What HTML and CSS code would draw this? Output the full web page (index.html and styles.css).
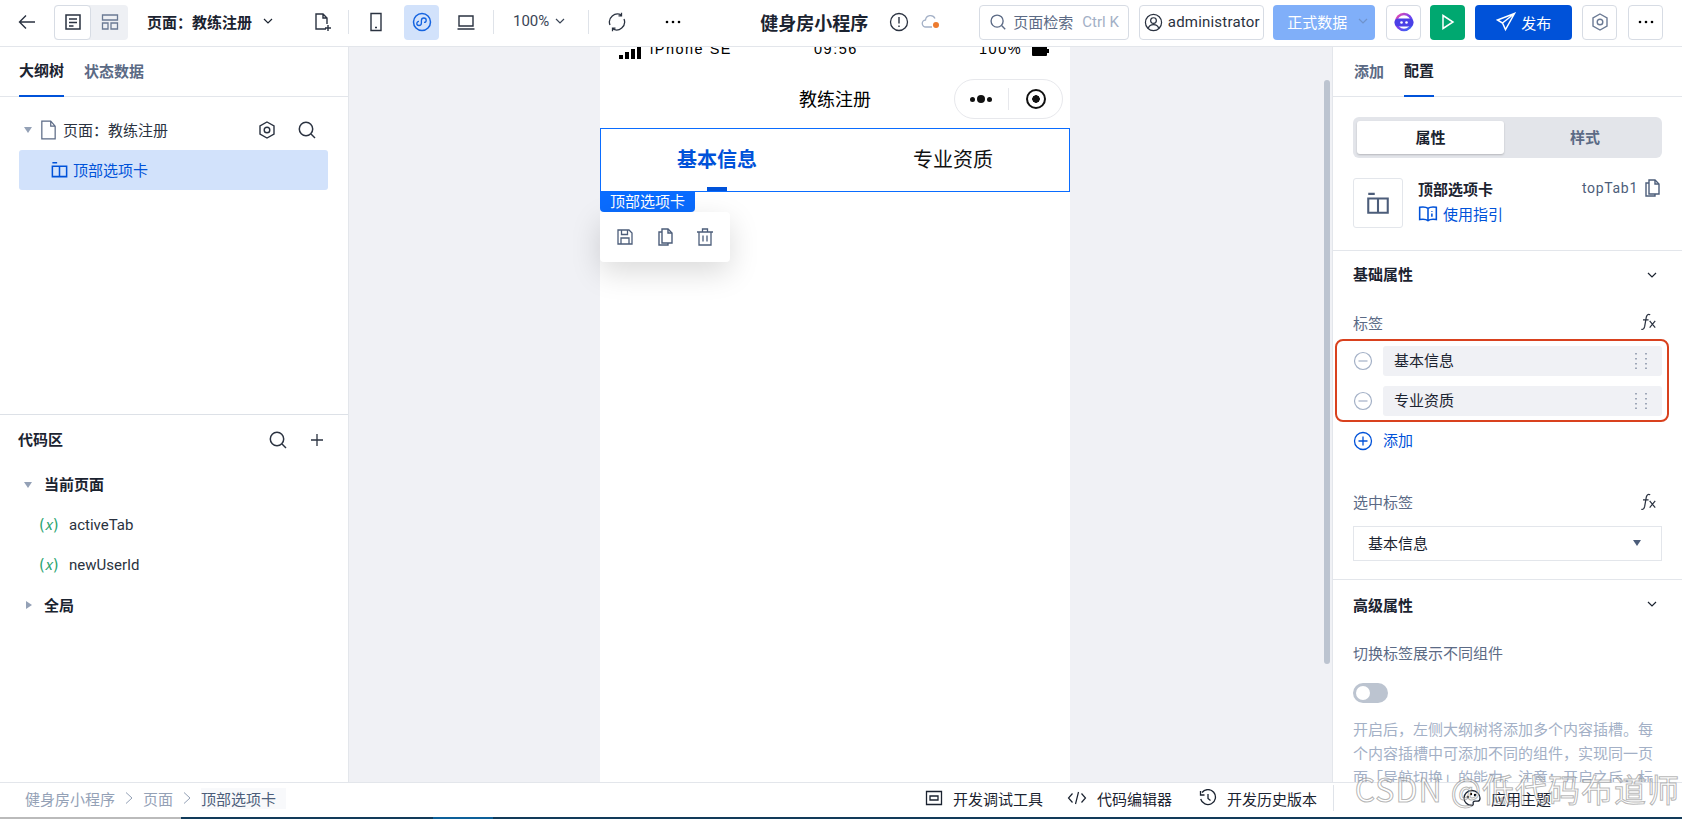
FILE: index.html
```html
<!DOCTYPE html>
<html lang="zh-CN">
<head>
    <meta charset="UTF-8">
    <title>健身房小程序</title>
    <link rel="stylesheet" href="styles.css">
</head>
<body>
    <svg class="icon-defs" width="0" height="0">
        <symbol id="i-search" viewBox="0 0 20 20"><circle cx="9" cy="9" r="6.7" fill="none" stroke="currentColor" stroke-width="1.5"/><path d="M14 14l4 4" fill="none" stroke="currentColor" stroke-width="1.5"/></symbol>
        <symbol id="i-hex" viewBox="0 0 20 20"><path d="M10 2l7 4v8l-7 4-7-4V6z" fill="none" stroke="currentColor" stroke-width="1.4"/><circle cx="10" cy="10" r="2.8" fill="none" stroke="currentColor" stroke-width="1.4"/></symbol>
        <symbol id="i-chev" viewBox="0 0 12 12"><path d="M2 4l4 4 4-4" fill="none" stroke="currentColor" stroke-width="1.2"/></symbol>
        <symbol id="i-copy" viewBox="0 0 20 20"><path d="M7 2h6l4 4v10H7z" fill="none" stroke="currentColor" stroke-width="1.4"/><path d="M13 2v4h4M7 5H4v13h9v-2" fill="none" stroke="currentColor" stroke-width="1.4"/></symbol>
        <symbol id="i-tab" viewBox="0 0 20 20"><path d="M2.500 6.500h15v11h-15zM10 6.500v11M2.500 3h5" fill="none" stroke="currentColor" stroke-width="1.6"/></symbol>
        <symbol id="i-fx" viewBox="0 0 18 18"><path d="M11 2.500c-2-1-3 0-3.500 2L6 13c-.4 2-1.500 3-3 2.500M4.500 7H9.500" fill="none" stroke="currentColor" stroke-width="1.1"/><path d="M10.500 8l5 6M15.500 8l-5 6" fill="none" stroke="currentColor" stroke-width="1.1"/></symbol>
        <symbol id="i-minus" viewBox="0 0 20 20"><circle cx="10" cy="10" r="8.500" fill="none" stroke="currentColor" stroke-width="1.2"/><path d="M5.500 10h9" stroke="currentColor" stroke-width="1.2"/></symbol>
        <symbol id="i-drag" viewBox="0 0 14 18"><path d="M2 1v1.500M2 6v1.500M2 11v1.500M2 15.500V17M12 1v1.500M12 6v1.500M12 11v1.500M12 15.500V17" stroke="currentColor" stroke-width="1.1"/></symbol>
        <symbol id="i-dots" viewBox="0 0 18 6"><circle cx="3" cy="3" r="1.300"/><circle cx="9" cy="3" r="1.300"/><circle cx="15" cy="3" r="1.300"/></symbol>
    </svg>

    <header class="topbar">
        <svg class="ico back" width="20" height="20" viewBox="0 0 20 20"><path d="M18 10H3M9 3.500L2.500 10 9 16.500" fill="none" stroke="currentColor" stroke-width="1.4"/></svg>
        <div class="view-switch">
            <span class="view-btn on"><svg width="20" height="20" viewBox="0 0 20 20"><path d="M3 3h14v14H3zM6 7h8M6 10.500h8M6 14h4.500" fill="none" stroke="currentColor" stroke-width="1.5"/></svg></span>
            <span class="view-btn"><svg width="20" height="20" viewBox="0 0 20 20"><path d="M2.500 3h15v5h-15zM2.500 11h5.500v6h-5.500zM11 11h6.500v6H11z" fill="none" stroke="currentColor" stroke-width="1.3"/></svg></span>
        </div>
        <div class="page-pick">页面：教练注册<svg width="12" height="12"><use href="#i-chev"/></svg></div>
        <svg class="ico file-add" width="20" height="20" viewBox="0 0 20 20"><path d="M14 17H4V2h7l4 4v6M11 2v4h4M13 16h6M16 13v6" fill="none" stroke="currentColor" stroke-width="1.4"/></svg>
        <span class="vline"></span>
        <svg class="ico phone-ico" width="20" height="20" viewBox="0 0 20 20"><path d="M5 1.500h10v17H5zM9 15.500h2" fill="none" stroke="currentColor" stroke-width="1.4"/></svg>
        <span class="mini-btn"><svg width="20" height="20" viewBox="0 0 20 20"><circle cx="10" cy="10" r="8.500" fill="none" stroke="currentColor" stroke-width="1.5"/><path d="M7 13.500c-1.500 0-2.200-1-2.200-2 0-1.300 1-2.200 2.200-2M7 13.500c1.500 0 2.400-1 2.400-2.500V8.500c0-1.500 1-2.500 2.500-2.500 1.300 0 2.300 1 2.300 2.200 0 1.300-1 2.200-2.200 2.200" fill="none" stroke="currentColor" stroke-width="1.3"/></svg></span>
        <svg class="ico laptop-ico" width="20" height="20" viewBox="0 0 20 20"><path d="M3 4h14v10H3zM1.500 17h17" fill="none" stroke="currentColor" stroke-width="1.4"/></svg>
        <span class="vline second"></span>
        <div class="zoom-pick">100%<svg width="12" height="12"><use href="#i-chev"/></svg></div>
        <span class="vline third"></span>
        <svg class="ico refresh" width="20" height="20" viewBox="0 0 20 20"><path d="M3 13A8 8 0 0 1 14.500 3.200M17 7a8 8 0 0 1-11.500 9.800M14.500 .8v3h-3M5.500 19.200v-3h3" fill="none" stroke="currentColor" stroke-width="1.3"/></svg>
        <svg class="ico dots-ico" width="18" height="6"><use href="#i-dots"/></svg>
        <div class="app-title">健身房小程序</div>
        <svg class="ico warn" width="20" height="20" viewBox="0 0 20 20"><circle cx="10" cy="10" r="8.500" fill="none" stroke="currentColor" stroke-width="1.3"/><path d="M10 5v6.500M10 13.500v1.500" fill="none" stroke="currentColor" stroke-width="1.4"/></svg>
        <svg class="ico cloud" width="20" height="18" viewBox="0 0 20 18"><path d="M11 14H5a3.500 3.500 0 0 1-.5-7A5 5 0 0 1 14 5.500" fill="none" stroke="#a3b0c6" stroke-width="1.3"/><circle cx="15" cy="12" r="3" fill="#ed7b2f"/></svg>
        <div class="search-box"><svg width="18" height="18"><use href="#i-search"/></svg><span>页面检索</span><em>Ctrl K</em></div>
        <div class="tool-btn admin"><svg width="19" height="19" viewBox="0 0 20 20"><circle cx="10" cy="10" r="8.500" fill="none" stroke="currentColor" stroke-width="1.3"/><circle cx="10" cy="8" r="3" fill="none" stroke="currentColor" stroke-width="1.3"/><path d="M4.500 16c1-3 3-3.800 5.500-3.800s4.500.8 5.500 3.800" fill="none" stroke="currentColor" stroke-width="1.3"/></svg>administrator</div>
        <div class="data-btn">正式数据<svg width="12" height="12"><use href="#i-chev"/></svg></div>
        <div class="tool-btn square ai"><svg width="22" height="22" viewBox="0 0 22 22"><defs><linearGradient id="aig" x1="0" y1="0" x2="1" y2="1"><stop offset="0" stop-color="#f04fa8"/><stop offset=".5" stop-color="#7a3ff0"/><stop offset="1" stop-color="#2a6cf0"/></linearGradient></defs><circle cx="11" cy="11" r="8" fill="none" stroke="url(#aig)" stroke-width="2.500"/><rect x="1.500" y="7.500" width="19" height="8" rx="4" fill="#4a3fe6"/><circle cx="8.500" cy="11.500" r="1.300" fill="#fff"/><circle cx="13.500" cy="11.500" r="1.300" fill="#fff"/></svg></div>
        <div class="run-btn"><svg width="16" height="18" viewBox="0 0 16 18"><path d="M3 2.500l10 6.500-10 6.500z" fill="none" stroke="#fff" stroke-width="1.500"/></svg></div>
        <div class="publish-btn"><svg width="20" height="20" viewBox="0 0 20 20"><path d="M18.500 1.500L1.500 8l5 3 3 6.500zM6.500 11L18.500 1.500" fill="none" stroke="#fff" stroke-width="1.500"/></svg>发布</div>
        <div class="tool-btn square"><svg class="grey" width="20" height="20"><use href="#i-hex"/></svg></div>
        <div class="tool-btn square more"><svg width="18" height="6"><use href="#i-dots"/></svg></div>
    </header>

    <main class="workspace">
        <aside class="left-panel">
            <div class="outline">
                <nav class="tabs">
                    <span class="tab on">大纲树</span>
                    <span class="tab">状态数据</span>
                </nav>
                <div class="page-row">
                    <span class="tri down"></span>
                    <svg class="doc" width="19" height="20" viewBox="0 0 17 18"><path d="M2.500 1h8l4 4.500V17h-12zM10.500 1v4.500h4" fill="none" stroke="#5b6a85" stroke-width="1.100"/></svg>
                    <span class="page-name">页面：教练注册</span>
                    <svg class="row-ico" width="20" height="20"><use href="#i-hex"/></svg>
                    <svg class="row-ico" width="20" height="20"><use href="#i-search"/></svg>
                </div>
                <div class="selected-row"><svg width="19" height="19"><use href="#i-tab"/></svg>顶部选项卡</div>
            </div>
            <div class="code-area">
                <div class="code-head">
                    <span>代码区</span>
                    <svg width="20" height="20"><use href="#i-search"/></svg>
                    <svg width="20" height="20" viewBox="0 0 20 20"><path d="M10 4v12M4 10h12" stroke="currentColor" stroke-width="1.300"/></svg>
                </div>
                <div class="code-group first"><span class="tri down"></span><span class="lift">当前页面</span></div>
                <div class="code-var"><i>(𝑥)</i>activeTab</div>
                <div class="code-var"><i>(𝑥)</i>newUserId</div>
                <div class="code-group"><span class="tri right"></span><span class="lift">全局</span></div>
            </div>
        </aside>

        <section class="canvas">
            <div class="phone">
                <div class="status-bar">
                    <span class="signal"><b></b><b></b><b></b><b></b></span>
                    <span class="carrier">iPhone SE</span>
                    <span class="clock">09:56</span>
                    <span class="battery-txt">100%</span>
                    <span class="battery"></span>
                </div>
                <div class="nav-bar">
                    <span>教练注册</span>
                    <div class="capsule">
                        <span class="cap-dots"><b></b><b></b><b></b></span>
                        <span class="cap-line"></span>
                        <span class="cap-rec"></span>
                    </div>
                </div>
                <div class="tab-box">
                    <span class="top-tab on">基本信息</span>
                    <span class="top-tab">专业资质</span>
                </div>
                <div class="sel-label">顶部选项卡</div>
                <div class="sel-tools">
                    <svg width="20" height="20" viewBox="0 0 20 20"><path d="M3 3h11l3 3v11H3zM6.500 3v4.500h6V3M6 17v-6h8v6" fill="none" stroke="currentColor" stroke-width="1.300"/></svg>
                    <svg width="20" height="20"><use href="#i-copy"/></svg>
                    <svg width="20" height="20" viewBox="0 0 20 20"><path d="M4 5v13h12V5M2 5h16M7.500 5V2h5v3M8 8.500v6M12 8.500v6" fill="none" stroke="currentColor" stroke-width="1.300"/></svg>
                </div>
            </div>
            <div class="scrollbar"></div>
        </section>

        <aside class="right-panel">
            <nav class="tabs right">
                <span class="tab">添加</span>
                <span class="tab on">配置</span>
            </nav>
            <div class="comp-head">
                <div class="segment"><span class="seg on">属性</span><span class="seg">样式</span></div>
                <div class="comp-card">
                    <div class="comp-ico"><svg width="26" height="26"><use href="#i-tab"/></svg></div>
                    <div class="comp-info">
                        <div class="comp-line"><b>顶部选项卡</b><span>topTab1</span><svg width="20" height="20"><use href="#i-copy"/></svg></div>
                        <a class="guide"><svg width="20" height="20" viewBox="0 0 18 18"><path d="M9 4C7.500 2.800 4.500 2.500 1.500 3v11c3-.5 6-.2 7.500 1 1.500-1.200 4.500-1.500 7.500-1V3C13.500 2.500 10.500 2.800 9 4zM9 4v11M12.500 6.500v.8M12.500 8.500v3" fill="none" stroke="currentColor" stroke-width="1.400"/></svg>使用指引</a>
                    </div>
                </div>
            </div>
            <div class="prop-section">
                <div class="sec-title">基础属性<svg width="12" height="12"><use href="#i-chev"/></svg></div>
                <div class="field-label">标签<svg width="20" height="20"><use href="#i-fx"/></svg></div>
                <div class="tag-list">
                    <div class="tag-row"><svg class="minus" width="20" height="20"><use href="#i-minus"/></svg><div class="tag-input"><span class="lift2">基本信息</span><svg width="14" height="18"><use href="#i-drag"/></svg></div></div>
                    <div class="tag-row"><svg class="minus" width="20" height="20"><use href="#i-minus"/></svg><div class="tag-input"><span class="lift2">专业资质</span><svg width="14" height="18"><use href="#i-drag"/></svg></div></div>
                </div>
                <div class="add-row"><svg width="20" height="20" viewBox="0 0 20 20"><circle cx="10" cy="10" r="8.500" fill="none" stroke="currentColor" stroke-width="1.300"/><path d="M5.500 10h9M10 5.500v9" stroke="currentColor" stroke-width="1.300"/></svg><span class="lift2">添加</span></div>
                <div class="field-label gap"><span class="lift">选中标签</span><svg width="20" height="20"><use href="#i-fx"/></svg></div>
                <div class="select-box"><span class="lift">基本信息</span><span class="sel-arrow"></span></div>
            </div>
            <div class="prop-section adv">
                <div class="sec-title">高级属性<svg width="12" height="12"><use href="#i-chev"/></svg></div>
                <div class="adv-label">切换标签展示不同组件</div>
                <div class="toggle"><span></span></div>
                <p class="help">开启后，左侧大纲树将添加多个内容插槽。每个内容插槽中可添加不同的组件，实现同一页面「导航切换」的能力。注意：开启之后，标签内容将会被清除。</p>
            </div>
        </aside>
    </main>

    <footer class="bottom-bar">
        <div class="crumbs">
            <span>健身房小程序</span><svg width="10" height="14" viewBox="0 0 10 14"><path d="M2 1.500L8 7l-6 5.500" fill="none" stroke="currentColor" stroke-width="1"/></svg>
            <span>页面</span><svg width="10" height="14" viewBox="0 0 10 14"><path d="M2 1.500L8 7l-6 5.500" fill="none" stroke="currentColor" stroke-width="1"/></svg>
            <span class="cur">顶部选项卡</span>
        </div>
        <div class="dev-tools">
            <span class="dev-item"><svg width="18" height="18" viewBox="0 0 18 18"><path d="M1.500 2.500h15v13h-15zM5 7h8v4H5z" fill="none" stroke="currentColor" stroke-width="1.300"/></svg>开发调试工具</span>
            <span class="dev-item code"><svg width="20" height="18" viewBox="0 0 20 18"><path d="M5.500 4.500L1.500 9l4 4.500M14.500 4.500l4 4.500-4 4.500M11.500 3l-3 12" fill="none" stroke="currentColor" stroke-width="1.200"/></svg>代码编辑器</span>
            <span class="dev-item history"><svg width="18" height="18" viewBox="0 0 18 18"><path d="M3 3.500A7.500 7.500 0 1 1 1.700 10M1.500 2v4h4M9 5v4.500l2.500 2" fill="none" stroke="currentColor" stroke-width="1.300"/></svg>开发历史版本</span>
            <span class="dev-line"></span>
            <span class="dev-item theme"><svg width="18" height="18" viewBox="0 0 18 18"><path d="M9 1.500C4.500 1.500 1 5 1 9s3.500 7.500 7.500 7.500c1.500 0 2-1 1.700-2-.4-1.300.3-2.300 1.800-2.300h2.500c1.500 0 2.500-1 2.500-3 0-4-3.500-7.700-8-7.700z" fill="none" stroke="currentColor" stroke-width="1.300"/><circle cx="5" cy="8" r="1.200"/><circle cx="8" cy="5" r="1.200"/><circle cx="12" cy="6" r="1.200"/></svg>应用主题</span>
        </div>
    </footer>
    <div class="taskbar"><i class="t-grey"></i><i class="t-navy"></i><i class="t-blue"></i><i class="t-rest"></i></div>

    <div class="watermark">CSDN @低代码布道师</div>
</body>
</html>
```

FILE: styles.css
```css
* {
    box-sizing: border-box;
}
html, body {
    margin: 0;
    height: 100%;
}
body {
    display: flex;
    flex-direction: column;
    height: 100vh;
    overflow: hidden;
    font-family: "Noto Sans CJK SC", "Noto Sans", sans-serif;
    font-size: 15px;
    color: #1b2330;
    background: #fff;
}
svg {
    display: block;
    flex: none;
}
.icon-defs {
    position: absolute;
}
.lift {
    padding-bottom: 2px;
}
.lift2 {
    padding-bottom: 4px;
}

/* top bar */
.topbar {
    display: flex;
    align-items: center;
    flex: none;
    height: 47px;
    padding: 0 0 2px 17px;
    border-bottom: 1px solid #e3e6eb;
    background: #fff;
    position: relative;
    z-index: 2;
}
.topbar > * {
    flex: none;
}
.ico {
    color: #2a3240;
}
.back {
    margin-right: 17px;
}
.view-switch {
    display: flex;
    height: 35px;
    width: 74px;
    background: #eef0f4;
    border-radius: 4px;
}
.view-btn {
    width: 37px;
    display: flex;
    align-items: center;
    justify-content: center;
    color: #6b7a94;
}
.view-btn.on {
    background: #fff;
    border: 1px solid #d7dce4;
    border-radius: 4px;
    color: #2a3240;
}
.page-pick {
    display: flex;
    align-items: center;
    gap: 10px;
    margin-left: 19px;
    padding-bottom: 2px;
    width: 167px;
    font-weight: 700;
    font-size: 15px;
}
.file-add {
    margin-left: -2px;
}
.vline {
    width: 1px;
    height: 24px;
    background: #dfe3e9;
    margin: 0 17px 0 16px;
}
.mini-btn {
    width: 35px;
    height: 35px;
    margin-left: 18px;
    border-radius: 4px;
    background: #d2e2fb;
    color: #1463e0;
    display: flex;
    align-items: center;
    justify-content: center;
}
.laptop-ico {
    margin-left: 17px;
}
.vline.second {
    margin: 0 0 0 17px;
}
.zoom-pick {
    display: flex;
    align-items: center;
    gap: 5px;
    margin-left: 19px;
    padding-bottom: 2px;
    font-size: 15px;
    font-family: Roboto, sans-serif;
    color: #3a4556;
}
.vline.third {
    margin: 0 0 0 22px;
}
.refresh {
    margin-left: 18px;
}
.dots-ico {
    margin-left: 37px;
}
.app-title {
    margin-left: 78px;
    font-size: 18px;
    font-weight: 700;
    white-space: nowrap;
}
.warn {
    margin-left: 21px;
}
.cloud {
    margin-left: 12px;
}
.search-box {
    display: flex;
    align-items: center;
    gap: 6px;
    width: 150px;
    height: 35px;
    margin-left: 38px;
    padding-left: 9px;
    border: 1px solid #d7dce4;
    border-radius: 4px;
    color: #5b6a85;
    white-space: nowrap;
}
.search-box span {
    padding-bottom: 2px;
    font-size: 15px;
}
.search-box em {
    margin-left: 3px;
    font-style: normal;
    font-family: Roboto, sans-serif;
    color: #a3b0c6;
}
.tool-btn {
    display: flex;
    align-items: center;
    justify-content: center;
    height: 35px;
    border: 1px solid #d7dce4;
    border-radius: 4px;
    background: #fff;
}
.tool-btn.admin {
    width: 125px;
    margin-left: 10px;
    gap: 5px;
    font-family: Roboto, sans-serif;
    letter-spacing: .2px;
    color: #2a3240;
}
.tool-btn.square {
    width: 35px;
}
.tool-btn .grey {
    color: #6b7a94;
}
.tool-btn.more {
    margin-left: 11px;
}
.data-btn {
    display: flex;
    align-items: center;
    gap: 10px;
    width: 102px;
    height: 35px;
    margin-left: 9px;
    padding: 0 0 2px 14px;
    border-radius: 4px;
    background: #80aff9;
    color: #fff;
    font-size: 15px;
}
.data-btn svg {
    color: #6f93cc;
}
.ai {
    margin-left: 11px;
}
.run-btn {
    display: flex;
    align-items: center;
    justify-content: center;
    width: 35px;
    height: 35px;
    margin-left: 9px;
    border-radius: 4px;
    background: #00a870;
}
.publish-btn {
    display: flex;
    align-items: center;
    justify-content: center;
    gap: 5px;
    width: 97px;
    height: 35px;
    margin: 0 10px;
    border-radius: 4px;
    background: #0052d9;
    color: #fff;
    font-size: 15px;
}

/* workspace */
.workspace {
    display: flex;
    flex: 1;
    min-height: 0;
}
.left-panel {
    display: flex;
    flex-direction: column;
    flex: none;
    width: 349px;
    border-right: 1px solid #e3e6eb;
    background: #fff;
}
.outline {
    height: 368px;
    border-bottom: 1px solid #dde1e7;
}
.tabs {
    display: flex;
    gap: 20px;
    height: 50px;
    padding: 0 19px;
    border-bottom: 1px solid #e3e6eb;
}
.tabs.right {
    padding-left: 21px;
}
.tab {
    display: flex;
    align-items: center;
    height: 50px;
    padding-bottom: 3px;
    font-size: 15px;
    font-weight: 700;
    color: #5b6a85;
}
.tab.on {
    color: #1b2330;
    border-bottom: 2px solid #0052d9;
}
.page-row {
    display: flex;
    align-items: center;
    height: 40px;
    margin-top: 13px;
    padding-left: 24px;
    font-size: 15px;
}
.tri {
    display: inline-block;
    width: 0;
    height: 0;
    flex: none;
}
.tri.down {
    border-left: 4px solid transparent;
    border-right: 4px solid transparent;
    border-top: 6px solid #94a1b6;
}
.tri.right {
    margin-left: 2px;
    border-top: 4px solid transparent;
    border-bottom: 4px solid transparent;
    border-left: 6px solid #94a1b6;
}
.doc {
    margin-left: 7px;
}
.page-name {
    margin-left: 5px;
    padding-bottom: 2px;
    width: 194px;
    color: #2a3240;
}
.row-ico {
    margin-right: 20px;
    color: #2a3240;
}
.selected-row {
    display: flex;
    align-items: center;
    gap: 4px;
    height: 40px;
    margin: 0 20px 0 19px;
    padding: 0 0 2px 31px;
    border-radius: 3px;
    background: #d2e2fb;
    color: #0052d9;
    font-size: 15px;
}
.code-head {
    display: flex;
    align-items: center;
    gap: 19px;
    height: 49px;
    padding: 0 21px 0 18px;
    color: #2a3240;
}
.code-head span {
    flex: 1;
    padding-bottom: 2px;
    font-size: 15px;
    font-weight: 700;
    color: #1b2330;
}
.code-group {
    display: flex;
    align-items: center;
    gap: 12px;
    height: 40px;
    padding-left: 24px;
    font-size: 15px;
    font-weight: 700;
}
.code-group.first {
    height: 41px;
}
.code-var {
    display: flex;
    align-items: center;
    height: 40px;
    padding-left: 39px;
    font-family: Roboto, sans-serif;
    font-size: 15px;
    color: #2a3240;
}
.code-var i {
    width: 30px;
    font-style: normal;
    color: #2ba471;
    font-family: "DejaVu Sans", serif;
    font-size: 15px;
    white-space: nowrap;
}

/* canvas */
.canvas {
    display: flex;
    flex: 1;
    min-width: 0;
    overflow: hidden;
    background: #f0f1f5;
}
.phone {
    position: relative;
    flex: none;
    width: 470px;
    margin-left: 251px;
    margin-top: -10px;
    background: #fff;
}
.status-bar {
    display: flex;
    align-items: center;
    height: 24px;
    padding-left: 19px;
    font-family: "Liberation Sans", sans-serif;
    font-size: 14.500px;
    letter-spacing: 1.500px;
    color: #000;
}
.signal {
    display: flex;
    align-items: flex-end;
    gap: 2px;
    width: 31px;
    height: 12px;
    margin-top: 8px;
}
.signal b {
    width: 4px;
    background: #000;
}
.signal b:nth-child(1) { height: 4px; }
.signal b:nth-child(2) { height: 7px; }
.signal b:nth-child(3) { height: 10px; }
.signal b:nth-child(4) { height: 12px; }
.carrier {
    width: 164px;
}
.clock {
    width: 165px;
}
.battery-txt {
    width: 53px;
}
.battery {
    position: relative;
    width: 15px;
    height: 10px;
    margin-top: 3px;
    background: #000;
    border-radius: 1px;
}
.battery::after {
    content: "";
    position: absolute;
    right: -2px;
    top: 3px;
    width: 2px;
    height: 4px;
    background: #000;
}
.nav-bar {
    position: relative;
    display: flex;
    align-items: center;
    justify-content: center;
    height: 67px;
    padding-top: 6px;
    font-size: 18px;
    color: #000;
}
.capsule {
    position: absolute;
    top: 18px;
    right: 7px;
    display: flex;
    align-items: center;
    width: 109px;
    height: 40px;
    border: 1px solid #e7e8ec;
    border-radius: 20px;
}
.cap-dots {
    display: flex;
    align-items: center;
    gap: 2px;
    margin-left: 15px;
}
.cap-dots b {
    width: 5px;
    height: 5px;
    border-radius: 50%;
    background: #111;
}
.cap-dots b:nth-child(2) {
    width: 8px;
    height: 8px;
}
.cap-line {
    width: 1px;
    height: 22px;
    margin-left: 16px;
    background: #e7e8ec;
}
.cap-rec {
    width: 20px;
    height: 20px;
    margin-left: 17px;
    border-radius: 50%;
    border: 2px solid #111;
    background: radial-gradient(circle, #111 0 3.500px, #fff 4px);
}
.tab-box {
    display: flex;
    height: 64px;
    border: 1px solid #0a6cff;
}
.top-tab {
    position: relative;
    display: flex;
    align-items: center;
    justify-content: center;
    width: 50%;
    padding: 0 0 4px 2px;
    font-size: 20px;
    color: #111;
}
.top-tab.on {
    padding: 0 2px 4px 0;
    color: #0052d9;
    font-weight: 700;
}
.top-tab.on::after {
    content: "";
    position: absolute;
    left: 106px;
    bottom: 0;
    width: 20px;
    height: 4px;
    background: #0052d9;
}
.sel-label {
    position: absolute;
    left: 0;
    top: 155px;
    width: 95px;
    height: 20px;
    line-height: 18px;
    padding-left: 10px;
    border-radius: 0 0 4px 4px;
    background: #0a6cff;
    color: #fff;
    font-size: 15px;
    white-space: nowrap;
}
.sel-tools {
    position: absolute;
    left: 0;
    top: 175px;
    display: flex;
    align-items: center;
    gap: 20px;
    width: 130px;
    height: 50px;
    padding-left: 15px;
    border-radius: 4px;
    background: #fff;
    color: #4c5d7a;
    box-shadow: 0 10px 30px rgba(0, 0, 0, 0.15);
}
.scrollbar {
    flex: none;
    width: 6px;
    height: 584px;
    margin: 33px 2px 0 auto;
    border-radius: 3px;
    background: #bcc4d0;
}

/* right panel */
.right-panel {
    flex: none;
    width: 350px;
    overflow: hidden;
    border-left: 1px solid #e3e6eb;
    background: #fff;
}
.comp-head {
    height: 154px;
    padding: 20px 20px 0 20px;
    border-bottom: 1px solid #e3e6eb;
}
.segment {
    display: flex;
    height: 41px;
    padding: 4px;
    border-radius: 6px;
    background: #e3e5ea;
}
.seg {
    display: flex;
    align-items: center;
    justify-content: center;
    flex: 1;
    padding: 0 0 3px 8px;
    font-size: 15px;
    font-weight: 700;
    color: #5b6a85;
}
.seg.on {
    flex: none;
    width: 147px;
    padding-left: 0;
    background: #fff;
    border-radius: 3px;
    color: #1b2330;
    box-shadow: 0 1px 2px rgba(0, 0, 0, 0.2);
}
.comp-card {
    display: flex;
    gap: 15px;
    margin-top: 20px;
}
.comp-ico {
    display: flex;
    align-items: center;
    justify-content: center;
    width: 50px;
    height: 50px;
    border: 1px solid #e3e6eb;
    border-radius: 3px;
    color: #4c5d7a;
}
.comp-info {
    flex: 1;
}
.comp-line {
    display: flex;
    align-items: center;
    height: 20px;
    color: #4c5d7a;
}
.comp-line b {
    flex: 1;
    font-size: 15px;
    color: #1b2330;
}
.comp-line span {
    margin-right: 4px;
    font-family: Roboto, sans-serif;
    font-size: 14px;
    letter-spacing: .7px;
}
.guide {
    display: flex;
    align-items: center;
    gap: 5px;
    margin-top: 5px;
    color: #0052d9;
    font-size: 15px;
}
.prop-section {
    padding: 0 20px;
    border-bottom: 1px solid #e3e6eb;
    height: 329px;
}
.sec-title {
    display: flex;
    align-items: center;
    justify-content: space-between;
    height: 50px;
    padding: 0 4px 6px 0;
    font-size: 15px;
    font-weight: 700;
}
.sec-title svg {
    margin-top: 4px;
}
.field-label {
    display: flex;
    align-items: center;
    justify-content: space-between;
    height: 24px;
    margin-top: 9px;
    padding-right: 4px;
    color: #5b6a85;
    font-size: 15px;
}
.field-label svg {
    color: #2a3240;
}
.field-label.gap {
    margin-top: 34px;
}
.tag-list {
    margin: 5px -7px 0 -18px;
    padding: 5px 5px 4px 16px;
    border: 2px solid #d9411e;
    border-radius: 8px;
}
.tag-row {
    display: flex;
    align-items: center;
    gap: 10px;
    height: 30px;
}
.tag-row + .tag-row {
    margin-top: 10px;
}
.minus {
    color: #a3b0c6;
}
.tag-input {
    display: flex;
    align-items: center;
    justify-content: space-between;
    flex: 1;
    height: 30px;
    padding: 0 14px 0 11px;
    border-radius: 3px;
    background: #f0f1f5;
    font-size: 15px;
}
.tag-input svg {
    color: #5b6a85;
}
.add-row {
    display: flex;
    align-items: center;
    gap: 10px;
    height: 30px;
    margin-top: 4px;
    color: #0052d9;
    font-size: 15px;
}
.select-box {
    position: relative;
    display: flex;
    align-items: center;
    height: 35px;
    margin-top: 12px;
    padding-left: 14px;
    border: 1px solid #e3e6eb;
    font-size: 15px;
}
.sel-arrow {
    position: absolute;
    right: 20px;
    top: 13px;
    border-left: 4px solid transparent;
    border-right: 4px solid transparent;
    border-top: 6px solid #4c5d7a;
}
.adv {
    border-bottom: none;
    height: auto;
}
.adv .sec-title {
    height: 48px;
    padding-bottom: 0;
}
.adv .sec-title svg {
    margin-top: 0;
}
.adv-label {
    margin-top: 14px;
    color: #5b6a85;
    font-size: 15px;
}
.toggle {
    width: 35px;
    height: 20px;
    margin-top: 20px;
    padding: 3px;
    border-radius: 10px;
    background: #bcc4d0;
}
.toggle span {
    display: block;
    width: 14px;
    height: 14px;
    border-radius: 50%;
    background: #fff;
}
.help {
    margin: 14px 0 0 0;
    line-height: 24px;
    font-size: 15px;
    color: #a3b0c6;
}

/* bottom bar */
.bottom-bar {
    display: flex;
    align-items: center;
    justify-content: space-between;
    flex: none;
    height: 35px;
    padding: 0 0 4px 25px;
    border-top: 1px solid #e3e6eb;
    background: #fff;
    position: relative;
    z-index: 2;
}
.crumbs {
    display: flex;
    align-items: center;
    gap: 9px;
    font-size: 15px;
    color: #94a1b6;
}
.crumbs .cur {
    padding: 0 10px 0 0;
    background: #f8f9fb;
    color: #4c5d7a;
}
.dev-tools {
    display: flex;
    align-items: center;
    color: #1b2330;
    font-size: 15px;
}
.dev-item {
    display: flex;
    align-items: center;
    gap: 10px;
    margin-right: 24px;
}
.dev-item.code {
    margin-right: 27px;
}
.dev-item.history {
    margin-right: 16px;
}
.dev-line {
    width: 1px;
    height: 26px;
    margin-right: 129px;
    background: #dfe3e9;
}
.dev-item.theme {
    margin-right: 131px;
}
.taskbar {
    display: flex;
    flex: none;
    height: 2px;
}
.taskbar i {
    display: block;
    height: 2px;
}
.t-grey { width: 181px; background: #bbb; }
.t-navy { width: 252px; background: #123b5a; }
.t-blue { width: 60px; background: #0d6099; }
.t-rest { flex: 1; background: #123b5a; }

/* watermark laid over the picture */
.watermark {
    position: absolute;
    right: 2px;
    top: 765px;
    z-index: 5;
    font-size: 32px;
    letter-spacing: 1px;
    white-space: nowrap;
    color: rgba(255, 255, 255, 0.35);
    -webkit-text-stroke: 1px rgba(120, 120, 120, 0.55);
}
```
